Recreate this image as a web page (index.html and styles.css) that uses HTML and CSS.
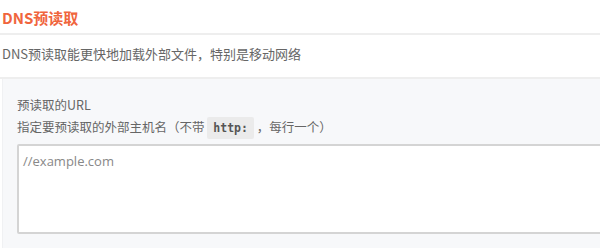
FILE: index.html
```html
<!DOCTYPE html>
<html lang="zh-CN">
<head>
    <meta charset="UTF-8">
    <title>DNS预读取</title>
    <link rel="stylesheet" href="styles.css">
</head>
<body>
    <div class="page">
        <h2 class="title">DNS预读取</h2>
        <p class="desc">DNS预读取能更快地加载外部文件，特别是移动网络</p>
        <div class="panel">
            <label class="field-label">预读取的URL</label>
            <p class="help">指定要预读取的外部主机名（不带 <code>http:</code> ，每行一个）</p>
            <textarea class="urls" placeholder="//example.com"></textarea>
        </div>
    </div>
</body>
</html>
```
FILE: styles.css
```css
body {
    margin: 0;
    background: #fff;
    font-family: "Noto Sans CJK SC", "Noto Sans", sans-serif;
    color: #666;
}
.page {
    width: 600px;
    height: 248px;
    overflow: hidden;
}
.title {
    margin: 0;
    padding: 0 0 0 2px;
    height: 35px;
    line-height: 36px;
    font-size: 15px;
    font-weight: bold;
    color: #f0653d;
    border-bottom: 2px solid #eeeeee;
    box-sizing: border-box;
}
.desc {
    margin: 0;
    padding: 0 0 0 2px;
    height: 44px;
    line-height: 38px;
    font-size: 13px;
    color: #666;
    border-bottom: 2px solid #eeeeee;
    box-sizing: border-box;
}
.panel {
    margin-left: 2px;
    background: #f7f8fa;
    border-left: 1px solid #f0f1f3;
    padding: 15px 0 14px 14px;
    height: 169px;
    box-sizing: border-box;
}
.field-label {
    display: block;
    font-size: 12.5px;
    line-height: 22px;
    color: #666;
}
.help {
    margin: 0 0 5px;
    font-size: 12.5px;
    line-height: 22px;
    color: #666;
}
.help code {
    font-family: "DejaVu Sans Mono", monospace;
    font-size: 11.5px;
    font-weight: bold;
    color: #555;
    background: #ebebeb;
    padding: 4px 6px;
    border-radius: 2px;
}
.urls {
    display: block;
    width: 620px;
    height: 90px;
    margin: 0;
    padding: 6px 4px;
    box-sizing: border-box;
    border: 2px solid #d4d4d4;
    border-radius: 2px;
    background: #fff;
    font-family: "Open Sans", "Noto Sans", sans-serif;
    font-size: 13px;
    resize: none;
}
.urls::placeholder {
    color: #888;
}
```
